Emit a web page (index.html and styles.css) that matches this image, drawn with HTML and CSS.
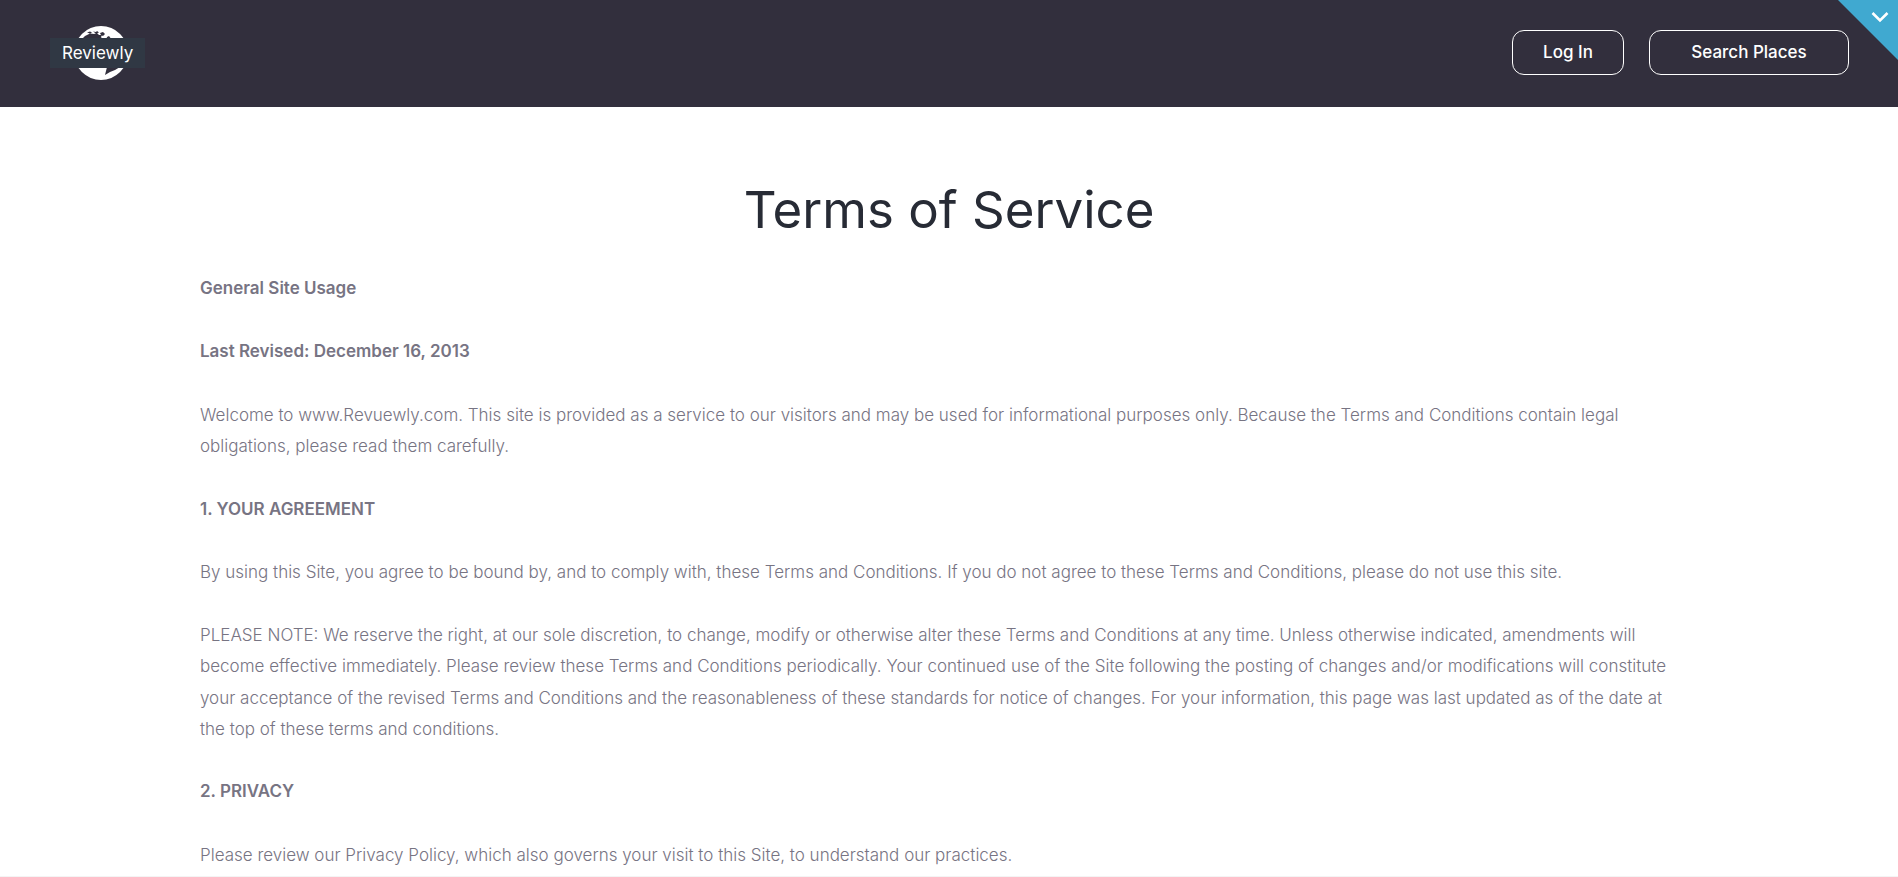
FILE: index.html
```
<!DOCTYPE html>
<html lang="en">
<head>
  <meta charset="UTF-8">
  <meta name="viewport" content="width=device-width, initial-scale=1.0">
  <title>Terms of Service | Reviewly</title>
  <link rel="stylesheet" href="styles.css">
</head>
<body>
  <header class="header">
    <a href="#" class="logo">
      <svg class="logo-globe" viewBox="0 0 54 54" aria-hidden="true">
        <circle cx="27" cy="27" r="27" fill="#fff"/>
        <path fill="#322f3d" d="M7 14l4-4 5-2.500 4 .5 3-1 2 2 3 0-1 2 2 3zM13 6.500l3-1 2 1-2 1zM19 5.500l3 .5 1-1 2 1.500-3 1zM26 7l3-1 2 2-2 2-2-1zM32 14l1-3 2-1 3 4zM33 41h13l-5 3-5 2-5 3z"/>
      </svg>
      <span class="logo-text">Reviewly</span>
    </a>
    <nav class="nav">
      <a href="#" class="btn">Log In</a>
      <a href="#" class="btn btn-search">Search Places</a>
    </nav>
    <button type="button" class="corner" aria-label="Open menu">
      <svg class="corner-icon" viewBox="0 0 18 12" aria-hidden="true">
        <path d="M1.500 2l7.500 7.500 7.500-7.500" fill="none" stroke="#fff" stroke-width="2.600"/>
      </svg>
    </button>
  </header>

  <main class="content">
    <h1>Terms of Service</h1>
    <h2>General Site Usage</h2>
    <h2>Last Revised: December 16, 2013</h2>
    <p>Welcome to www.Revuewly.com. This site is provided as a service to our visitors and may be used for informational purposes only. Because the Terms and Conditions contain legal obligations, please read them carefully.</p>
    <h2>1. YOUR AGREEMENT</h2>
    <p>By using this Site, you agree to be bound by, and to comply with, these Terms and Conditions. If you do not agree to these Terms and Conditions, please do not use this site.</p>
    <p>PLEASE NOTE: We reserve the right, at our sole discretion, to change, modify or otherwise alter these Terms and Conditions at any time. Unless otherwise indicated, amendments will become effective immediately. Please review these Terms and Conditions periodically. Your continued use of the Site following the posting of changes and/or modifications will constitute your acceptance of the revised Terms and Conditions and the reasonableness of these standards for notice of changes. For your information, this page was last updated as of the date at the top of these terms and conditions.</p>
    <h2>2. PRIVACY</h2>
    <p>Please review our Privacy Policy, which also governs your visit to this Site, to understand our practices.</p>
  </main>
</body>
</html>
```
FILE: styles.css
```
* {
  box-sizing: border-box;
}

body {
  margin: 0;
  font-family: Inter, "Open Sans", sans-serif;
  font-size: 17px;
  font-weight: 300;
  line-height: 1.85;
  color: #777483;
  background: #fff;
}

/* Header */
.header {
  position: relative;
  display: flex;
  justify-content: space-between;
  align-items: center;
  padding: 22px 49px 24px 50px;
  min-height: 107px;
  background: #322f3d;
}

.logo {
  display: grid;
  align-items: center;
  color: #fff;
  text-decoration: none;
}

.logo-globe,
.logo-text {
  grid-area: 1 / 1;
}

.logo-globe {
  justify-self: end;
  width: 54px;
  height: 54px;
  margin-right: 17px;
}

.logo-text {
  padding: 0 12px;
  background: #303844;
  font-size: 17px;
  font-weight: 400;
  line-height: 30px;
}

.nav {
  display: flex;
  gap: 25px;
}

.btn {
  min-width: 112px;
  padding: 0 30px;
  border: 1px solid #fff;
  border-radius: 12px;
  color: #fff;
  font-size: 17px;
  font-weight: 500;
  line-height: 43px;
  text-align: center;
  text-decoration: none;
}

.btn-search {
  min-width: 200px;
}

/* Blue corner in the top right */
.corner {
  position: absolute;
  top: 0;
  right: 0;
  width: 60px;
  height: 60px;
  padding: 0;
  border: none;
  background: #40a9d0;
  clip-path: polygon(0 0, 100% 0, 100% 100%);
  cursor: pointer;
}

.corner-icon {
  position: absolute;
  top: 11px;
  right: 9px;
  width: 18px;
  height: 12px;
}

/* Page text */
.content {
  padding: 71px 200px 5px;
  border-bottom: 1px solid #f4f4f4;
}

h1 {
  margin: 0 0 31px;
  color: #272b35;
  font-size: 51px;
  font-weight: 400;
  line-height: 64px;
  text-align: center;
}

h2,
p {
  margin: 0 0 32px;
  font-size: 17px;
}

h2 {
  font-weight: 600;
}

p {
  margin-bottom: 31px;
  padding-right: 8px;
}

p:last-child {
  margin-bottom: 0;
}
```
